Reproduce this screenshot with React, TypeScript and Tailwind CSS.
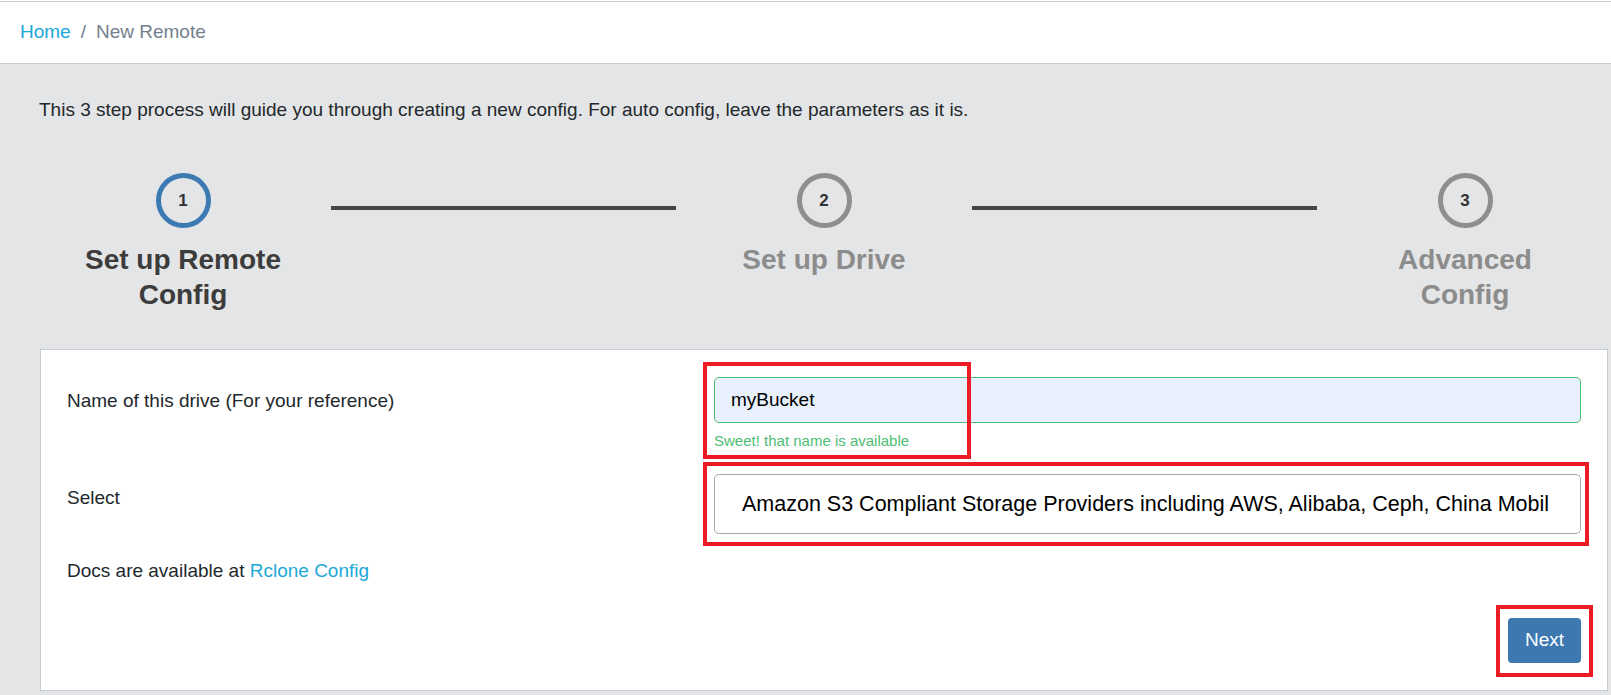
import React from "react";

function Step({ n, title, active }: { n: number; title: string; active?: boolean }) {
  return (
    <div className="w-[286px] shrink-0 flex flex-col items-center">
      <div
        className={
          active
            ? "w-[55px] h-[55px] rounded-full border-[5px] border-[#3d79b2] flex items-center justify-center text-[17px] font-bold text-[#333]"
            : "w-[55px] h-[55px] rounded-full border-[5px] border-[#8e8e8e] flex items-center justify-center text-[17px] font-bold text-[#333]"
        }
      >
        {n}
      </div>
      <div
        className={
          active
            ? "mt-[14px] w-[212px] text-center text-[28px] leading-[35px] font-bold text-[#3c3c3c]"
            : "mt-[14px] w-[212px] text-center text-[28px] leading-[35px] font-bold text-[#8c8c8c]"
        }
      >
        {title}
      </div>
    </div>
  );
}

export default function App() {
  return (
    <div className="min-h-screen w-full overflow-hidden bg-[#e4e5e6] font-['Liberation_Sans',Arial,sans-serif] text-[#23282c]">
      <div className="bg-white pt-[1px]">
        <div className="h-[63px] border-t border-b border-[#c8ced3] flex items-center px-[20px] text-[19px]">
          <span className="text-[#20a8d8]">Home</span>
          <span className="px-[10px] text-[#73818f]">/</span>
          <span className="text-[#73818f]">New Remote</span>
        </div>
      </div>

      <div className="pl-[40px] pr-[3px]">
        <p className="pt-[32px] -ml-[1px] text-[19px] leading-[27px]">
          This 3 step process will guide you through creating a new config. For auto config, leave the parameters as it is.
        </p>

        <div className="mt-[50px] flex items-start">
          <Step n={1} title="Set up Remote Config" active />
          <div className="flex-1 h-[4px] bg-[#444] mt-[33px] mx-[5px]" />
          <Step n={2} title="Set up Drive" />
          <div className="flex-1 h-[4px] bg-[#444] mt-[33px] mx-[5px]" />
          <Step n={3} title="Advanced Config" />
        </div>

        <div className="mt-[37px] bg-white border border-[#c8ced3]">
          <div className="px-[26px] pt-[27px] pb-[27px] text-[19px]">
            <div className="flex">
              <div className="w-[647px] shrink-0 pt-[10px] leading-[27px]">Name of this drive (For your reference)</div>
              <div className="flex-1 min-w-0 relative">
                <div className="h-[46px] rounded-[5px] border border-[#4dbd74] bg-[#e8f0fe] flex items-center pl-[16px] text-black">
                  myBucket
                </div>
                <div className="mt-[9px] text-[15px] leading-[18px] text-[#4dbd74]">Sweet! that name is available</div>
                <div className="absolute left-[-11px] top-[-15px] w-[268px] h-[97px] border-[4px] border-[#ec1c24] pointer-events-none" />
              </div>
            </div>

            <div className="flex mt-[24px]">
              <div className="w-[647px] shrink-0 pt-[10px] leading-[27px]">Select</div>
              <div className="flex-1 min-w-0 relative">
                <div className="h-[60px] rounded-[5px] border border-[#a9a9a9] bg-white flex items-center pl-[27px] pr-[20px] text-[21.5px] text-black">
                  <div className="flex-1 min-w-0 overflow-hidden whitespace-nowrap">
                    Amazon S3 Compliant Storage Providers including AWS, Alibaba, Ceph, China Mobil
                  </div>
                </div>
                <div className="absolute left-[-11px] top-[-12px] w-[886px] h-[84px] border-[4px] border-[#ec1c24] pointer-events-none" />
              </div>
            </div>

            <div className="mt-[23px] leading-[27px]">
              Docs are available at <span className="text-[#20a8d8]">Rclone Config</span>
            </div>

            <div className="mt-[34px] flex justify-end">
              <div className="relative">
                <button className="h-[45px] px-[17px] rounded-[4px] bg-[#3d78b0] text-white text-[19px]">Next</button>
                <div className="absolute left-[-12px] top-[-13px] w-[97px] h-[72px] border-[4px] border-[#ec1c24] pointer-events-none" />
              </div>
            </div>
          </div>
        </div>
      </div>
    </div>
  );
}
